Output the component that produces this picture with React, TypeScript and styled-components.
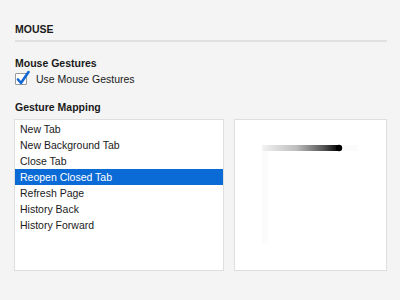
import { useState } from 'react'
import styled, { createGlobalStyle } from 'styled-components'

const GlobalStyle = createGlobalStyle`
   html, body {
      margin: 0;
      padding: 0;
      background: #f4f4f4;
   }
   body {
      font-family: 'Liberation Sans', Arial, sans-serif;
      font-size: 10px;
      color: #1a1a1a;
   }
`

const Page = styled.div`
   width: 400px;
   height: 300px;
   box-sizing: border-box;
   padding: 23px 13px 0 15px;
`
const SectionTitle = styled.div`
   font-weight: bold;
   font-size: 10.5px;
   line-height: 12px;
   padding-bottom: 5px;
   border-bottom: 2px solid #e1e1e1;
`
const Group = styled.div<{ $top: number }>`
   margin-top: ${({ $top }) => $top}px;
`
const GroupTitle = styled.div`
   font-weight: bold;
   font-size: 10.5px;
   line-height: 12px;
`
const CheckRow = styled.label`
   display: flex;
   align-items: center;
   gap: 9px;
   height: 14px;
   margin-top: 3px;
   font-size: 10.5px;
   cursor: default;
`
const CheckBox = styled.span`
   position: relative;
   width: 12px;
   height: 12px;
   box-sizing: border-box;
   border: 1px solid #9a9a9a;
   border-radius: 1px;
   background: #fff;
   & svg {
      position: absolute;
      left: 0px;
      top: -4px;
   }
`
const Panels = styled.div`
   display: flex;
   gap: 10px;
   margin-top: 6px;
   margin-left: -1px;
`
const ActionList = styled.ul`
   list-style: none;
   margin: 0;
   padding: 1px 0 0;
   width: 210px;
   height: 152px;
   box-sizing: border-box;
   background: #fff;
   border: 1px solid #dedede;
`
const ActionItem = styled.li<{ $selected: boolean }>`
   height: 16px;
   line-height: 16px;
   padding-left: 5px;
   font-size: 10.5px;
   color: ${({ $selected }) => ($selected ? '#fff' : '#1a1a1a')};
   background: ${({ $selected }) => ($selected ? '#0b6bd6' : 'transparent')};
`
const Preview = styled.div`
   width: 153px;
   height: 152px;
   box-sizing: border-box;
   background: #fff;
   border: 1px solid #dedede;
`

const ACTIONS = [
   'New Tab',
   'New Background Tab',
   'Close Tab',
   'Reopen Closed Tab',
   'Refresh Page',
   'History Back',
   'History Forward',
]

const CheckMark = () => (
   <svg width="14" height="16" viewBox="0 0 14 16">
      <path
         d="M2 9.5 L5 13 L12.5 2"
         fill="none"
         stroke="#1468d4"
         strokeWidth="2.6"
         strokeLinecap="round"
         strokeLinejoin="round"
      />
   </svg>
)

const GestureDrawing = () => (
   <svg width="151" height="150" viewBox="0 0 151 150">
      <defs>
         <linearGradient id="stroke" x1="27" y1="0" x2="104" y2="0" gradientUnits="userSpaceOnUse">
            <stop offset="0" stopColor="#f2f2f2" />
            <stop offset="0.45" stopColor="#bdbdbd" />
            <stop offset="0.8" stopColor="#555" />
            <stop offset="1" stopColor="#000" />
         </linearGradient>
      </defs>
      <path d="M30 28 L30 123" stroke="#fbfbfb" strokeWidth="6" />
      <path d="M104 28 L123 28" stroke="#fbfbfb" strokeWidth="6" />
      <path d="M27 28 L104 28" stroke="url(#stroke)" strokeWidth="6" />
      <circle cx="104" cy="28" r="3.2" fill="#000" />
   </svg>
)

export default function App() {
   const [enabled, setEnabled] = useState(true)
   const [selected, setSelected] = useState(3)
   return (
      <Page>
         <GlobalStyle />
         <SectionTitle>MOUSE</SectionTitle>
         <Group $top={15}>
            <GroupTitle>Mouse Gestures</GroupTitle>
            <CheckRow onClick={() => setEnabled(!enabled)}>
               <CheckBox>{enabled && <CheckMark />}</CheckBox>
               Use Mouse Gestures
            </CheckRow>
         </Group>
         <Group $top={15}>
            <GroupTitle>Gesture Mapping</GroupTitle>
            <Panels>
               <ActionList>
                  {ACTIONS.map((a, i) => (
                     <ActionItem key={a} $selected={i === selected} onClick={() => setSelected(i)}>
                        {a}
                     </ActionItem>
                  ))}
               </ActionList>
               <Preview>
                  <GestureDrawing />
               </Preview>
            </Panels>
         </Group>
      </Page>
   )
}
